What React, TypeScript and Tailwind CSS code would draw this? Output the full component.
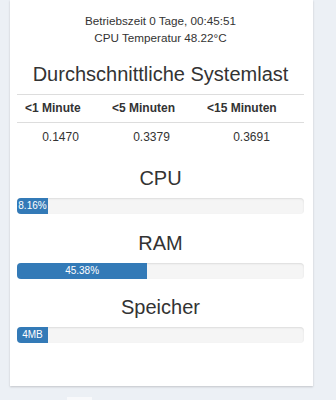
import React from "react";

const font = { fontFamily: '"Liberation Sans", Arial, sans-serif' };

function Bar({ label, pct }: { label: string; pct: number }) {
  return (
    <div className="mt-[8px] h-[16px] w-full overflow-hidden rounded-[4px] bg-[#f5f5f5] shadow-[inset_0_1px_2px_rgba(0,0,0,0.1)]">
      <div
        className="flex h-full min-w-[31px] items-center justify-center bg-[#337ab7] text-[10px] leading-[16px] text-white"
        style={{ width: `${pct}%` }}
      >
        {label}
      </div>
    </div>
  );
}

export default function App() {
  return (
    <div className="h-[400px] w-[336px] overflow-hidden bg-[#ecf0f5] text-[#333]" style={font}>
      <div className="ml-[10px] h-[386px] w-[303px] bg-white pl-[7px] pr-[9px] shadow-[0_1px_2px_rgba(0,0,0,0.18)]">
        <div className="pt-[12px] text-center text-[11.7px] leading-[17px]">
          <div>Betriebszeit 0 Tage, 00:45:51</div>
          <div>CPU Temperatur 48.22°C</div>
        </div>
        <div className="mt-[16px] h-[24px] text-center text-[20px] leading-[24px]">
          Durchschnittliche Systemlast
        </div>
        <div className="mt-[8px] text-[12px]">
          <div className="grid h-[29px] grid-cols-[87px_95px_105px] border-y border-[#ddd] font-bold leading-[27px]">
            <div className="pl-[8px]">&lt;1 Minute</div>
            <div className="pl-[8px]">&lt;5 Minuten</div>
            <div className="pl-[8px]">&lt;15 Minuten</div>
          </div>
          <div className="grid h-[29px] grid-cols-[87px_95px_105px] text-center leading-[29px]">
            <div>0.1470</div>
            <div>0.3379</div>
            <div>0.3691</div>
          </div>
        </div>
        <div className="mt-[14px] h-[24px] text-center text-[20px] leading-[24px]">CPU</div>
        <Bar label="8.16%" pct={8.16} />
        <div className="mt-[16.5px] h-[24px] text-center text-[20px] leading-[24px]">RAM</div>
        <Bar label="45.38%" pct={45.38} />
        <div className="mt-[16.5px] h-[24px] text-center text-[20px] leading-[24px]">Speicher</div>
        <Bar label="4MB" pct={1} />
      </div>
      <div className="ml-[67px] mt-[11px] h-[3px] w-[25px] bg-[#f8f9fb]" />
    </div>
  );
}
